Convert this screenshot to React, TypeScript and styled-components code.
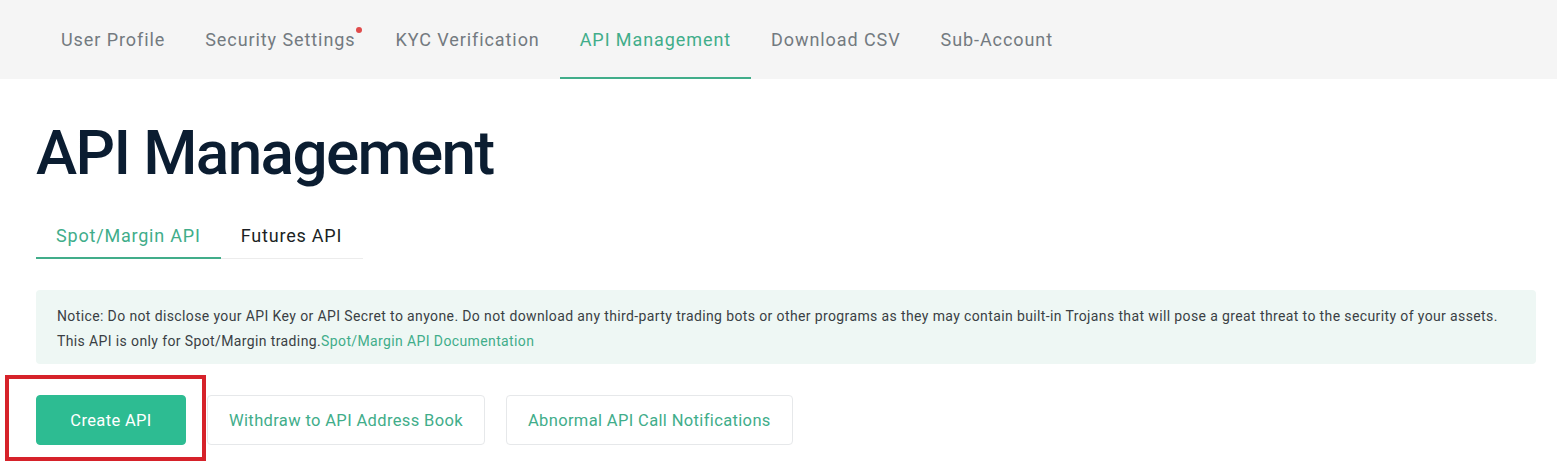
import React from "react";
import styled, { createGlobalStyle } from "styled-components";

const Global = createGlobalStyle`
  html, body { margin: 0; padding: 0; background: #ffffff; }
  body { font-family: Roboto, "Open Sans", sans-serif; }
  * { box-sizing: border-box; }
`;

const Page = styled.div`
  width: 1557px;
  height: 468px;
  overflow: hidden;
  position: relative;
  background: #fff;
`;

const TopNav = styled.nav`
  height: 79px;
  background: #f5f5f5;
  display: flex;
  align-items: stretch;
  padding-left: 41px;
`;

const NavItem = styled.div<{ $active?: boolean }>`
  position: relative;
  display: flex;
  align-items: center;
  padding: 2px 20px 0;
  font-size: 18px;
  letter-spacing: 0.92px;
  color: ${(p) => (p.$active ? "#41ad8a" : "#737a80")};
  border-bottom: 2px solid ${(p) => (p.$active ? "#41ad8a" : "transparent")};
`;

const Dot = styled.span`
  position: absolute;
  top: 27px;
  right: 14px;
  width: 6px;
  height: 6px;
  border-radius: 50%;
  background: #e04b4b;
`;

const Content = styled.main`
  padding: 38px 21px 0 36px;
  display: flex;
  flex-direction: column;
`;

const Title = styled.h1`
  margin: 0;
  font-size: 62px;
  font-weight: 500;
  line-height: 72px;
  color: #0b1d31;
  letter-spacing: -1.6px;
`;

const SubTabs = styled.div`
  margin-top: 26px;
  display: flex;
  width: 327px;
  border-bottom: 1px solid #ececec;
`;

const SubTab = styled.div<{ $active?: boolean }>`
  padding: 10px 20px 11px;
  margin-bottom: -1px;
  font-size: 18px;
  letter-spacing: 0.8px;
  color: ${(p) => (p.$active ? "#41ad8a" : "#1b1f24")};
  border-bottom: 2px solid ${(p) => (p.$active ? "#41ad8a" : "transparent")};
`;

const Notice = styled.div`
  margin-top: 31px;
  background: #eef7f4;
  border-radius: 4px;
  padding: 14px 21px 10px;
  font-size: 14px;
  letter-spacing: 0.38px;
  line-height: 25px;
  color: #3a3f44;
`;

const DocLink = styled.a`
  color: #41ad8a;
  text-decoration: none;
`;

const Actions = styled.div`
  margin-top: 31px;
  display: flex;
  gap: 21px;
`;

const Button = styled.button<{ $primary?: boolean }>`
  height: 50px;
  padding: 0 21px;
  min-width: 150px;
  border-radius: 4px;
  font-family: Roboto, "Open Sans", sans-serif;
  font-size: 16.5px;
  letter-spacing: 0.36px;
  cursor: pointer;
  border: 1px solid ${(p) => (p.$primary ? "#2dbc92" : "#e6e8ea")};
  background: ${(p) => (p.$primary ? "#2dbc92" : "#ffffff")};
  color: ${(p) => (p.$primary ? "#ffffff" : "#41ad8a")};
`;

const Highlight = styled.div`
  position: absolute;
  left: 5px;
  top: 375px;
  width: 201px;
  height: 86px;
  border: 4px solid #d6222a;
  pointer-events: none;
`;

const navItems = [
  "User Profile",
  "Security Settings",
  "KYC Verification",
  "API Management",
  "Download CSV",
  "Sub-Account",
];

export default function App() {
  return (
    <Page>
      <Global />
      <TopNav>
        {navItems.map((n) => (
          <NavItem key={n} $active={n === "API Management"}>
            {n}
            {n === "Security Settings" && <Dot />}
          </NavItem>
        ))}
      </TopNav>
      <Content>
        <Title>API Management</Title>
        <SubTabs>
          <SubTab $active>Spot/Margin API</SubTab>
          <SubTab>Futures API</SubTab>
        </SubTabs>
        <Notice>
          Notice: Do not disclose your API Key or API Secret to anyone. Do not download any
          third-party trading bots or other programs as they may contain built-in Trojans that
          will pose a great threat to the security of your assets.
          <br />
          This API is only for Spot/Margin trading.
          <DocLink href="#">Spot/Margin API Documentation</DocLink>
        </Notice>
        <Actions>
          <Button $primary>Create API</Button>
          <Button>Withdraw to API Address Book</Button>
          <Button>Abnormal API Call Notifications</Button>
        </Actions>
      </Content>
      <Highlight />
    </Page>
  );
}
